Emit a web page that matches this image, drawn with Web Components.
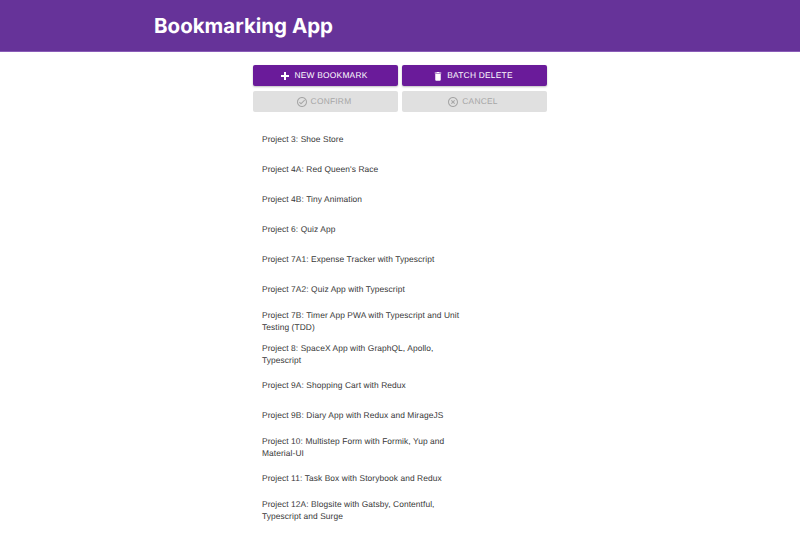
<!DOCTYPE html>
<html><head><meta charset="utf-8"><style>
html,body{margin:0;padding:0;background:#fff;overflow:hidden;height:533px}
body{font-family:"Liberation Sans",Arial,sans-serif;text-rendering:geometricPrecision}
</style></head><body>
<app-header>Bookmarking App</app-header>
<app-main>
  <div slot="actions" style="display:contents">
  <app-button icon="plus">NEW BOOKMARK</app-button>
  <app-button icon="trash">BATCH DELETE</app-button>
  <app-button icon="check" disabled>CONFIRM</app-button>
  <app-button icon="cancel" disabled>CANCEL</app-button>
  </div>
  <bookmark-item>Project 3: Shoe Store</bookmark-item>
  <bookmark-item>Project 4A: Red Queen's Race</bookmark-item>
  <bookmark-item>Project 4B: Tiny Animation</bookmark-item>
  <bookmark-item>Project 6: Quiz App</bookmark-item>
  <bookmark-item>Project 7A1: Expense Tracker with Typescript</bookmark-item>
  <bookmark-item>Project 7A2: Quiz App with Typescript</bookmark-item>
  <bookmark-item>Project 7B: Timer App PWA with Typescript and Unit Testing (TDD)</bookmark-item>
  <bookmark-item>Project 8: SpaceX App with GraphQL, Apollo, Typescript</bookmark-item>
  <bookmark-item>Project 9A: Shopping Cart with Redux</bookmark-item>
  <bookmark-item>Project 9B: Diary App with Redux and MirageJS</bookmark-item>
  <bookmark-item>Project 10: Multistep Form with Formik, Yup and Material-UI</bookmark-item>
  <bookmark-item>Project 11: Task Box with Storybook and Redux</bookmark-item>
  <bookmark-item>Project 12A: Blogsite with Gatsby, Contentful, Typescript and Surge</bookmark-item>
  <bookmark-item>Project 12B: Bookmarking App with Gatsby and FaunaDB</bookmark-item>
</app-main>
<script>
const ICONS={
plus:'<path fill="currentColor" d="M20 14h-6v6h-4v-6H4v-4h6V4h4v6h6v4z"/>',
trash:'<path fill="currentColor" d="M6.5 19.5c0 1 .8 1.8 1.8 1.8h7.4c1 0 1.8-.8 1.8-1.8V8h-11v11.500zM18.500 5h-3.300l-1-1.200H9.800L8.800 5H5.500v2h13V5z"/>',
check:'<path fill="currentColor" d="M12 2C6.48 2 2 6.48 2 12s4.48 10 10 10 10-4.48 10-10S17.52 2 12 2zm0 18c-4.41 0-8-3.59-8-8s3.59-8 8-8 8 3.59 8 8-3.59 8-8 8zm4.59-12.42L10 14.17l-2.59-2.58L6 13l4 4 8-8z"/>',
cancel:'<path fill="currentColor" d="M14.59 8L12 10.59 9.41 8 8 9.41 10.59 12 8 14.59 9.41 16 12 13.41 14.59 16 16 14.59 13.41 12 16 9.41 14.59 8zM12 2C6.47 2 2 6.47 2 12s4.47 10 10 10 10-4.47 10-10S17.53 2 12 2zm0 18c-4.41 0-8-3.59-8-8s3.59-8 8-8 8 3.59 8 8-3.59 8-8 8z"/>'};
function def(name,html,init){customElements.define(name,class extends HTMLElement{
 constructor(){super();const r=this.attachShadow({mode:'open'});r.innerHTML=html;}
 connectedCallback(){init&&init(this)}
});}
def('app-header',`<style>
:host{display:block;height:52px;box-sizing:border-box;background:#663399;border-bottom:1px solid #8a5cb8;color:#fff;
font:700 20.5px Inter,sans-serif;padding:0 0 0 154px;line-height:52px}
</style><slot></slot>`);
def('app-main',`<style>
:host{display:block;width:294px;margin:0 auto;padding-top:13px}
.actions{display:grid;grid-template-columns:1fr 1fr;row-gap:5px;column-gap:4px}
.list{display:block;margin-top:12px;padding:0 8px 0 9px;width:200px}
</style><div class="actions"><slot name="actions"></slot></div><div class="list"><slot></slot></div>`);
def('app-button',`<style>
:host{display:flex;align-items:center;justify-content:center;height:21px;box-sizing:border-box;padding-bottom:1px;border-radius:2px;background:#6a1b9a;color:#fff;
font:400 8.4px "Liberation Sans",Arial,sans-serif;letter-spacing:.24px;box-shadow:0 1px 2px rgba(0,0,0,.25)}
:host([disabled]){background:#e0e0e0;color:#a6a6a6;box-shadow:none}
svg{width:12px;height:12px;margin:1px 3px 0 -4px;display:block}
</style><svg viewBox="0 0 24 24"></svg><slot></slot>`,el=>{el.shadowRoot.querySelector('svg').innerHTML=ICONS[el.getAttribute('icon')]});
def('bookmark-item',`<style>
:host{display:flex;align-items:center;min-height:30px;box-sizing:border-box;padding:4.5px 0;
font:400 8.4px/12px "Liberation Sans",Arial,sans-serif;letter-spacing:.09px;color:#383838}
</style><slot></slot>`);
</script>
</body></html>
